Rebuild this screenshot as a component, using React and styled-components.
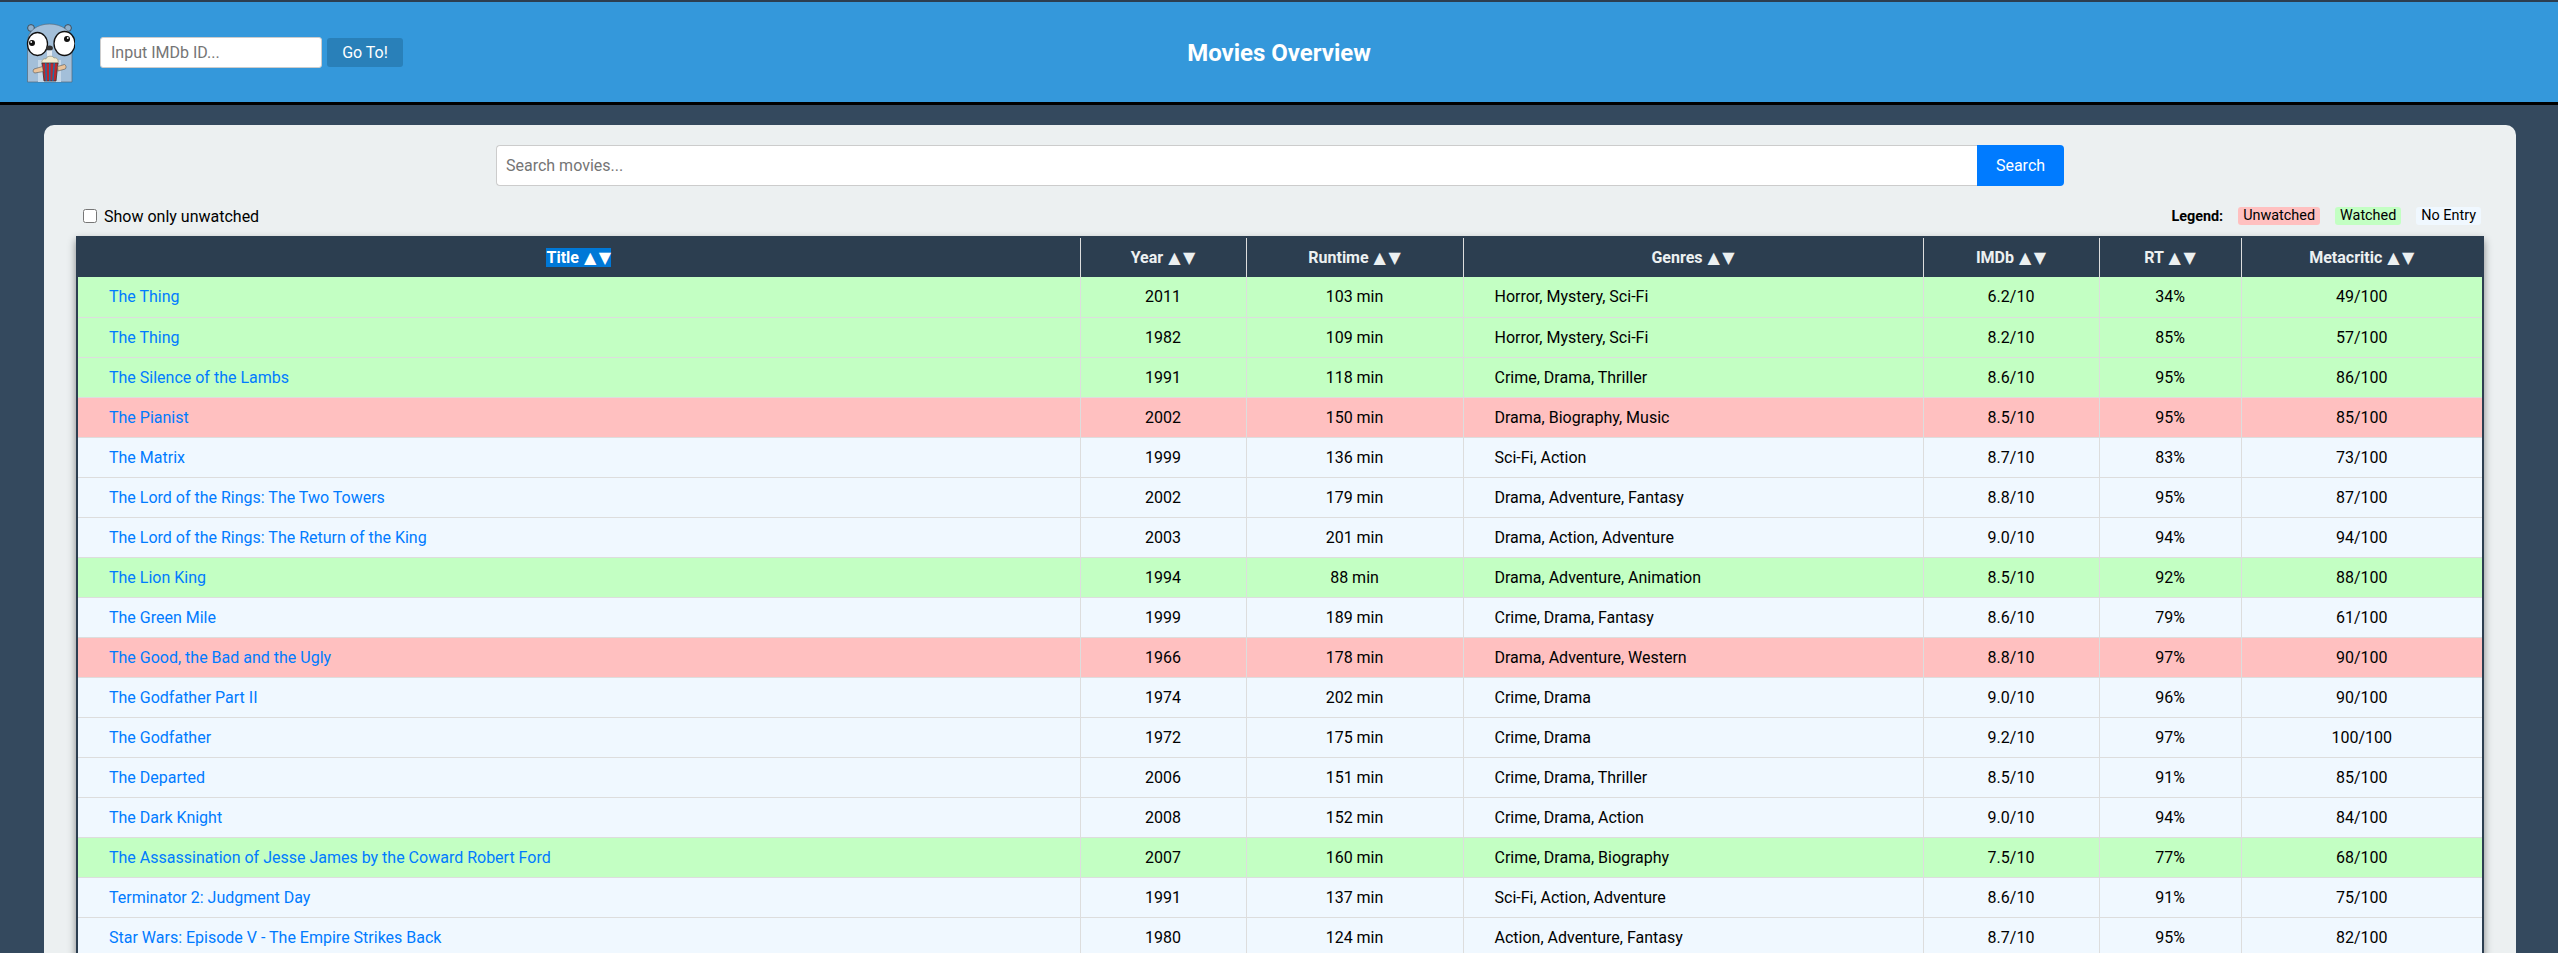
import React from "react";
import styled, { createGlobalStyle } from "styled-components";

const Global = createGlobalStyle`
  html, body { margin: 0; padding: 0; height: 100%; overflow: hidden; background: #34495e; }
  body { font-family: Roboto, "Liberation Sans", sans-serif; color: #000; }
  * { box-sizing: border-box; }
`;
const Page = styled.div`height: 953px; overflow: hidden; background: #34495e; border-top: 2px solid #2c3e50;`;
const Header = styled.header`
  height: 103px; background: #3498db; border-bottom: 3px solid #000;
  display: grid; grid-template-columns: 1fr auto 1fr; align-items: center; padding: 0 25px;
`;
const HeaderLeft = styled.div`display: flex; align-items: center; gap: 25px;`;
const Logo = styled.svg`margin-top: 2px; flex: none;`;
const IdForm = styled.form`display: flex; align-items: center; gap: 5px;`;
const IdInput = styled.input`
  width: 222px; height: 31px; border: 1px solid #ccc; border-radius: 3px; padding: 0 10px;
  font: 16px Roboto, sans-serif; background: #fff;
  &::placeholder { color: #757575; }
`;
const GoButton = styled.button`
  width: 76px; height: 29px; border: 0; border-radius: 3px; background: #2980b9; color: #fff;
  font: 16px Roboto, sans-serif;
`;
const PageTitle = styled.h1`margin: 2px 0 0; color: #fff; font-size: 24px; font-weight: 700; text-align: center;`;
const Card = styled.main`
  margin: 20px 42px 0 44px; background: #ecf0f1; border-radius: 10px 10px 0 0; padding: 20px 32px;
`;
const SearchBar = styled.form`display: flex; width: 1568px; margin: 0 auto; height: 41px;`;
const SearchInput = styled.input`
  flex: 1; border: 1px solid #ccc; border-right: 0; border-radius: 4px 0 0 4px; padding: 0 9px;
  font: 16px Roboto, sans-serif; background: #fff;
  &::placeholder { color: #757575; }
`;
const SearchButton = styled.button`
  width: 87px; border: 0; border-radius: 0 4px 4px 0; background: #007bff; color: #fff;
  font: 16px Roboto, sans-serif;
`;
const ControlRow = styled.div`
  display: flex; justify-content: space-between; align-items: center; height: 18px; margin: 21px 3px 11px 7px;
`;
const CheckLabel = styled.label`display: flex; align-items: center; gap: 7px; font-size: 16px;`;
const Check = styled.input`margin: 0; width: 14px; height: 14px;`;
const Legend = styled.div`display: flex; align-items: center; gap: 15px; font-size: 14.4px;`;
const LegendLabel = styled.strong``;
const Badge = styled.span`
  padding: 0 5px; height: 18px; line-height: 18px; border-radius: 3px; background: ${p => p.$bg};
`;
const TableFrame = styled.div`
  border: 2px solid #2c3e50; border-bottom: 0; box-shadow: 0 4px 8px rgba(0,0,0,.45);
`;
const Table = styled.table`
  width: 100%; table-layout: fixed; border-collapse: collapse; font-size: 16px;
`;
const Th = styled.th`
  height: 39px; padding: 0; background: #2c3e50; color: #ecf0f1; font-size: 16px; font-weight: 700;
  white-space: nowrap; border-left: 1px solid #ddd; &:first-child { border-left: 0; }
`;
const Selected = styled.span`background: #0078d7; color: #fff; display: inline-block; line-height: 19px;`;
const Arrows = styled.span`
  font-family: "DejaVu Sans", sans-serif; font-weight: 400; letter-spacing: 2.5px;
  margin-left: 1px; margin-right: -2.5px;
`;
const Row = styled.tr`background: ${p => p.$bg};`;
const Td = styled.td`
  height: 40px; padding: 0 ${p => (p.$left ? "31px" : "0")}; text-align: ${p => (p.$left ? "left" : "center")};
  border: 1px solid #ddd; border-top: 0; &:first-child { border-left: 0; } &:last-child { border-right: 0; }
  white-space: nowrap;
`;
const TitleLink = styled.a`color: #007bff; text-decoration: none;`;

const Gopher = () => (
  <Logo width="50" height="62" viewBox="25 22 50 62">
    <circle cx="31" cy="28" r="3.4" fill="#8fb0cc" stroke="#35434f" strokeWidth=".9" />
    <circle cx="68" cy="28" r="3.4" fill="#8fb0cc" stroke="#35434f" strokeWidth=".9" />
    <path d="M27.500 82V42C27.500 31 37 24 49.500 24S72 31 72 42v40z" fill="#a3bfd9" stroke="#56697a" strokeWidth=".7" />
    <path d="M38 82V60h23v22z" fill="#c6d8e8" />
    <ellipse cx="37.500" cy="44" rx="10" ry="11.500" fill="#fff" stroke="#111" strokeWidth="1.300" />
    <ellipse cx="64.500" cy="43.500" rx="10.500" ry="12" fill="#fff" stroke="#111" strokeWidth="1.300" />
    <circle cx="32" cy="43" r="3" fill="#111" /><circle cx="67" cy="39" r="3" fill="#111" />
    <circle cx="31.200" cy="42" r=".9" fill="#fff" /><circle cx="67.800" cy="38" r=".9" fill="#fff" />
    <ellipse cx="49.500" cy="48" rx="3.400" ry="2.600" fill="#333" />
    <path d="M47 50.500h5v6h-5z" fill="#e4ebf1" />
    <path d="M42 64c-1-4 2-6 4-5 0-3 7-4 8-1 3-1 5 2 4 6z" fill="#f1ebd0" stroke="#8a846a" strokeWidth=".6" />
    <path d="M42 63h16l-2 18H44z" fill="#c0272d" stroke="#333" strokeWidth=".8" />
    <path d="M45 63h1.500l.6 18h-1.500zM49 63h1.500v18H49zM53.500 63H55l-1.500 18H52z" fill="#1d6fa5" />
    <path d="M34 69l8.500-2.500.8 5-8.300 1.500c-2 0-2.500-3-1-4zM57.500 66.500l7-2c1.800.5 2 3.500.8 4.500l-7.300 2z" fill="#eac39a" stroke="#555" strokeWidth=".6" />
  </Logo>
);

const G = "#c3ffc3", R = "#ffc0c0", B = "#f0f8ff";
const movies = [
  ["The Thing", 2011, "103 min", "Horror, Mystery, Sci-Fi", "6.2/10", "34%", "49/100", G],
  ["The Thing", 1982, "109 min", "Horror, Mystery, Sci-Fi", "8.2/10", "85%", "57/100", G],
  ["The Silence of the Lambs", 1991, "118 min", "Crime, Drama, Thriller", "8.6/10", "95%", "86/100", G],
  ["The Pianist", 2002, "150 min", "Drama, Biography, Music", "8.5/10", "95%", "85/100", R],
  ["The Matrix", 1999, "136 min", "Sci-Fi, Action", "8.7/10", "83%", "73/100", B],
  ["The Lord of the Rings: The Two Towers", 2002, "179 min", "Drama, Adventure, Fantasy", "8.8/10", "95%", "87/100", B],
  ["The Lord of the Rings: The Return of the King", 2003, "201 min", "Drama, Action, Adventure", "9.0/10", "94%", "94/100", B],
  ["The Lion King", 1994, "88 min", "Drama, Adventure, Animation", "8.5/10", "92%", "88/100", G],
  ["The Green Mile", 1999, "189 min", "Crime, Drama, Fantasy", "8.6/10", "79%", "61/100", B],
  ["The Good, the Bad and the Ugly", 1966, "178 min", "Drama, Adventure, Western", "8.8/10", "97%", "90/100", R],
  ["The Godfather Part II", 1974, "202 min", "Crime, Drama", "9.0/10", "96%", "90/100", B],
  ["The Godfather", 1972, "175 min", "Crime, Drama", "9.2/10", "97%", "100/100", B],
  ["The Departed", 2006, "151 min", "Crime, Drama, Thriller", "8.5/10", "91%", "85/100", B],
  ["The Dark Knight", 2008, "152 min", "Crime, Drama, Action", "9.0/10", "94%", "84/100", B],
  ["The Assassination of Jesse James by the Coward Robert Ford", 2007, "160 min", "Crime, Drama, Biography", "7.5/10", "77%", "68/100", G],
  ["Terminator 2: Judgment Day", 1991, "137 min", "Sci-Fi, Action, Adventure", "8.6/10", "91%", "75/100", B],
  ["Star Wars: Episode V - The Empire Strikes Back", 1980, "124 min", "Action, Adventure, Fantasy", "8.7/10", "95%", "82/100", B],
];
const columns = [1002, 166, 217, 460, 176, 142, 241];
const heads = ["Year", "Runtime", "Genres", "IMDb", "RT", "Metacritic"];

export default function App() {
  return (
    <Page>
      <Global />
      <Header>
        <HeaderLeft>
          <Gopher />
          <IdForm>
            <IdInput placeholder="Input IMDb ID..." />
            <GoButton type="button">Go To!</GoButton>
          </IdForm>
        </HeaderLeft>
        <PageTitle>Movies Overview</PageTitle>
      </Header>
      <Card>
        <SearchBar>
          <SearchInput placeholder="Search movies..." />
          <SearchButton type="button">Search</SearchButton>
        </SearchBar>
        <ControlRow>
          <CheckLabel><Check type="checkbox" />Show only unwatched</CheckLabel>
          <Legend>
            <LegendLabel>Legend:</LegendLabel>
            <Badge $bg={R}>Unwatched</Badge>
            <Badge $bg={G}>Watched</Badge>
            <Badge $bg={B}>No Entry</Badge>
          </Legend>
        </ControlRow>
        <TableFrame>
          <Table>
            <colgroup>{columns.map((w, i) => <col key={i} style={{ width: w }} />)}</colgroup>
            <thead>
              <tr>
                <Th><Selected>Title <Arrows>▲▼</Arrows></Selected></Th>
                {heads.map(h => <Th key={h}>{h} <Arrows>▲▼</Arrows></Th>)}
              </tr>
            </thead>
            <tbody>
              {movies.map((m, i) => (
                <Row key={i} $bg={m[7]}>
                  <Td $left><TitleLink href="#">{m[0]}</TitleLink></Td>
                  <Td>{m[1]}</Td>
                  <Td>{m[2]}</Td>
                  <Td $left>{m[3]}</Td>
                  <Td>{m[4]}</Td>
                  <Td>{m[5]}</Td>
                  <Td>{m[6]}</Td>
                </Row>
              ))}
            </tbody>
          </Table>
        </TableFrame>
      </Card>
    </Page>
  );
}
